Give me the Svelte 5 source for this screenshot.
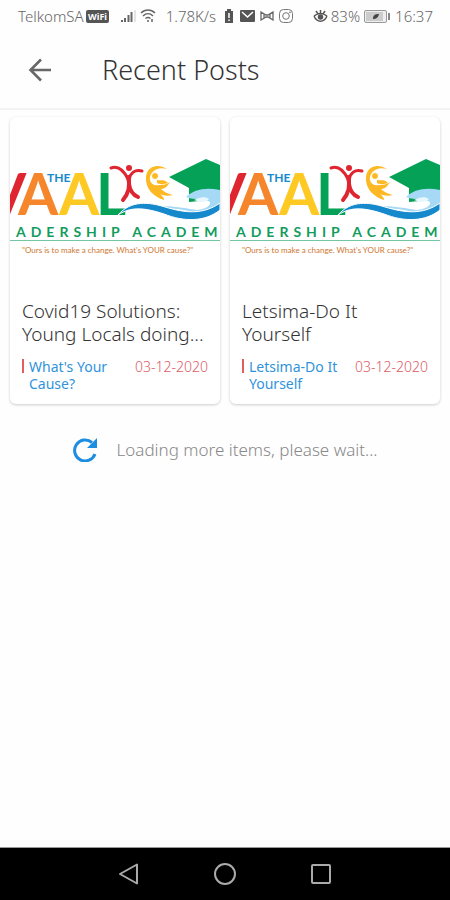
<script>
	const posts = [
		{
			title: 'Covid19 Solutions: Young Locals doing...',
			category: "What's Your Cause?",
			date: '03-12-2020'
		},
		{
			title: 'Letsima-Do It Yourself',
			category: 'Letsima-Do It Yourself',
			date: '03-12-2020'
		}
	];
</script>

{#snippet logo()}
	<svg class="logo" viewBox="0 0 210 172" role="img" aria-label="The Vaal Leadership Academy">
		<g class="word">
			<text x="-24" y="98" fill="#df2530">V</text>
			<text x="8" y="98" fill="#f5862b">A</text>
			<text x="49" y="98" fill="#fdc922">A</text>
			<text x="86" y="98" fill="#05a156">L</text>
		</g>
		<text class="the" x="37" y="65">THE</text>
		<circle cx="119" cy="51" r="3" fill="#df2530" />
		<g fill="none" stroke="#df2530" stroke-width="3" stroke-linecap="round">
			<path d="M101 51c8-3 13 3 17 11M132 54c-7-2-12 2-13 9" />
			<path d="M118 60c3 10 0 17-5 23M119 61v6c1 7 4 11 9 13" stroke-width="4" />
		</g>
		<g fill="#fdb924">
			<path
				d="M157 52c-9-6-20-3-21 8-1 12 8 20 18 23 0-3-2-4-4-6 4 2 8 2 13 1-5-1-9-3-12-6 5 0 7-4 9-7-4 3-8 3-11 3-5 1-8-1-9-5-1-7 6-14 17-11z"
			/>
			<path d="M147 63c3 1 8-1 11 3-3 1-8 2-11 0z" />
			<circle cx="145" cy="59" r="3.5" stroke="#fff" />
		</g>
		<path d="M159 60l37-18 14 6v34l-31 3v-14z" fill="#05a156" />
		<path
			d="M176 80c8-8 20-10 34-7v18c-8 4-17 7-27 4-18-5-32-4-51-3 24-6 41-1 55 1 8-1 14-4 13-8-7-5-14-1-24-5z"
			fill="#a5d9f5"
		/>
		<path d="M184 83c6-3 11-4 15-1-2 3-8 4-12 2z" fill="#e8f7fe" />
		<path
			d="M108 98c13-15 31-13 47-8 20 6 38 8 55-4v7c-15 12-36 12-56 4-18-6-33-8-46 1z"
			fill="#1689cd"
			stroke="#fff"
		/>
		<text class="academy" x="6" y="120">ADERSHIP ACADEM</text>
		<path d="M0 123.5h210" stroke="#72c7a2" />
		<text class="motto" x="12" y="136">"Ours is to make a change. What's YOUR cause?"</text>
	</svg>
{/snippet}

<div class="screen">
	<div class="status">
		<div class="group">
			<span>TelkomSA</span>
			<svg class="wifi-badge" width="23" height="13" viewBox="0 0 23 13">
				<rect width="23" height="13" rx="2" fill="#555" />
				<text x="2" y="10">WiFi</text>
			</svg>
			<svg class="signal" width="15" height="14" viewBox="0 0 15 14" stroke="#666" stroke-width="2">
				<path d="M1 13v-2M4 13V9M7.5 13V6M10.5 13V3" />
				<path d="M14 13V1" stroke="#ccc" stroke-width="1" />
			</svg>
			<svg width="16" height="14" viewBox="0 0 16 14" fill="none" stroke="#666" stroke-width="1.5">
				<path d="M1 4c4-4 10-4 14 0M3 7c3-3 7-3 10 0M5.5 9.5c2-1.5 3-1.5 5 0" />
				<path d="M8 11v2M12 10v3" />
			</svg>
			<span class="speed">1.78K/s</span>
		</div>
		<div class="group">
			<svg width="10" height="14" viewBox="0 0 10 14">
				<path d="M3 0h4v2h2v12H1V2h2z" fill="#555" />
				<path d="M5 4v5M5 10.5v1.5" stroke="#fff" stroke-width="1.5" />
			</svg>
			<svg class="mail" width="15" height="12" viewBox="0 0 15 12">
				<rect width="15" height="12" rx="1" fill="#555" />
				<path d="M2 2l5.5 5L13 2" fill="none" stroke="#fff" stroke-width="1.5" />
			</svg>
			<svg width="14" height="10" viewBox="0 0 14 10" fill="none" stroke="#666" stroke-width="1.3">
				<path d="M1 1l5 3h2l5-3v8L8 6H6L1 9zM4 3v4M10 3v4" />
			</svg>
			<svg class="insta" width="14" height="14" viewBox="0 0 14 14" fill="none" stroke="#777">
				<rect x="0.5" y="0.5" width="13" height="13" rx="4" />
				<circle cx="7" cy="7" r="3.3" />
				<circle cx="11" cy="3.3" r="0.5" />
			</svg>
			<svg width="15" height="13" viewBox="0 0 15 13" fill="none" stroke="#555" stroke-width="1.5">
				<path d="M1 6c3 7 10 7 13 0M1 6c4-3 9-3 13 0M7.5 0v4M3 1l2 3M12 1l-2 3" />
				<circle cx="7.5" cy="7" r="2" fill="#555" />
			</svg>
			<span class="percent">83%</span>
			<svg class="battery" width="27" height="13" viewBox="0 0 27 13">
				<rect x="0.5" y="0.5" width="22" height="12" rx="1.5" fill="#eee" stroke="#999" />
				<rect x="2" y="2" width="17" height="9" fill="#ccc" />
				<path d="M9 9c0-4 2-5 6-5-1 4-3 5-6 5z" fill="#444" />
				<path d="M25 3v7" stroke="#888" stroke-width="2" />
			</svg>
			<span>16:37</span>
		</div>
	</div>

	<header>
		<button class="back" aria-label="Back">
			<svg width="24" height="24" viewBox="0 0 24 24" fill="none" stroke="#686868" stroke-width="2.6">
				<path d="M13 1.500L2.500 12 13 22.500M2.500 12H23" />
			</svg>
		</button>
		<h1>Recent Posts</h1>
	</header>

	<main>
		<div class="posts">
			{#each posts as post}
				<article>
					{@render logo()}
					<div class="body">
						<h2>{post.title}</h2>
						<div class="meta">
							<a href="#category">{post.category}</a>
							<time datetime="2020-12-03">{post.date}</time>
						</div>
					</div>
				</article>
			{/each}
		</div>

		<div class="loading" role="status">
			<svg width="24" height="24" viewBox="0 0 24 24">
				<path d="M22 16A10.5 10.5 0 1 1 19 4.5" fill="none" stroke="#1c8de0" stroke-width="3" />
				<path d="M24 0v10H14z" fill="#1c8de0" />
			</svg>
			<span>Loading more items, please wait...</span>
		</div>
	</main>

	<nav>
		<button aria-label="Back">
			<svg width="22" height="22" viewBox="0 0 22 22"><path d="M2 11L19 1.5v19z" /></svg>
		</button>
		<button aria-label="Home">
			<svg width="22" height="22" viewBox="0 0 22 22"><circle cx="11" cy="11" r="10" /></svg>
		</button>
		<button aria-label="Recent apps">
			<svg width="22" height="22" viewBox="0 0 22 22"><rect x="2" y="2" width="18" height="18" rx="1" /></svg>
		</button>
	</nav>
</div>

<style>
	:global(body) {
		margin: 0;
		background: #fefefe;
	}

	.screen {
		display: flex;
		flex-direction: column;
		min-height: 100vh;
		font-family: 'Noto Sans', 'Open Sans', sans-serif;
		font-weight: 300;
		color: #333;
	}
	svg {
		display: block;
		flex: none;
	}
	button {
		display: flex;
		align-items: center;
		justify-content: center;
		padding: 0;
		border: 0;
		background: none;
		cursor: pointer;
	}

	.status {
		display: flex;
		justify-content: space-between;
		height: 32px;
		padding: 0 17px 0 18px;
		font-size: 15px;
		color: #666;
	}
	.group {
		display: flex;
		align-items: center;
	}
	.wifi-badge {
		margin: 0 12px 0 2px;
	}
	.wifi-badge text {
		font-size: 9px;
		font-weight: 700;
		fill: #fff;
	}
	.signal {
		margin-right: 4px;
	}
	.speed {
		margin-left: 10px;
	}
	.mail {
		margin: 0 5px 0 6px;
	}
	.insta {
		margin: 0 20px 0 5px;
	}
	.percent {
		margin-left: 3px;
	}
	.battery {
		margin: 0 4px;
	}

	header {
		display: flex;
		align-items: center;
		height: 76px;
		border-bottom: 2px solid #f3f3f3;
	}
	.back {
		width: 48px;
		height: 48px;
		margin: 0 38px 0 16px;
	}
	h1 {
		margin: 0;
		font-size: 27px;
		font-weight: 300;
		line-height: 36px;
	}

	main {
		flex: 1;
	}
	.posts {
		display: grid;
		grid-template-columns: 1fr 1fr;
		gap: 10px;
		padding: 7px 10px 0;
	}
	article {
		overflow: hidden;
		border-radius: 6px;
		background: #fff;
		box-shadow: 0 1px 3px rgba(0, 0, 0, 0.2);
	}
	.logo {
		width: 100%;
		height: auto;
	}
	.word {
		font-family: Lato, sans-serif;
		font-size: 58px;
		font-weight: 700;
	}
	.the {
		font-family: Lato, sans-serif;
		font-size: 12px;
		font-weight: 700;
		fill: #1689cd;
	}
	.academy {
		font-family: Lato, sans-serif;
		font-size: 14px;
		font-weight: 700;
		letter-spacing: 5px;
		fill: #129c5d;
	}
	.motto {
		font-family: Lato, sans-serif;
		font-size: 8px;
		font-weight: 400;
		fill: #d0762f;
	}
	.body {
		padding: 11px 12px 12px;
	}
	h2 {
		margin: 0 0 12px;
		font-size: 19px;
		font-weight: 300;
		line-height: 23px;
	}
	.meta {
		display: flex;
		align-items: flex-start;
		justify-content: space-between;
		gap: 16px;
		font-size: 14px;
		line-height: 17px;
	}
	.meta a {
		position: relative;
		padding-left: 7px;
		font-weight: 400;
		color: #2f93dc;
		text-decoration: none;
	}
	.meta a::before {
		content: '';
		position: absolute;
		top: 1px;
		left: 0;
		width: 2px;
		height: 14px;
		background: #e06060;
	}
	time {
		white-space: nowrap;
		color: #dc5c66;
	}

	.loading {
		display: flex;
		align-items: center;
		justify-content: center;
		gap: 20px;
		padding: 34px 0;
		font-size: 17px;
		line-height: 24px;
		color: #888;
	}

	nav {
		display: flex;
		justify-content: center;
		gap: 48px;
		height: 52px;
		border-top: 1px solid #999;
		background: #000;
	}
	nav button {
		width: 48px;
	}
	nav svg {
		fill: none;
		stroke: #aaa;
		stroke-width: 2;
		stroke-linejoin: round;
	}
</style>
